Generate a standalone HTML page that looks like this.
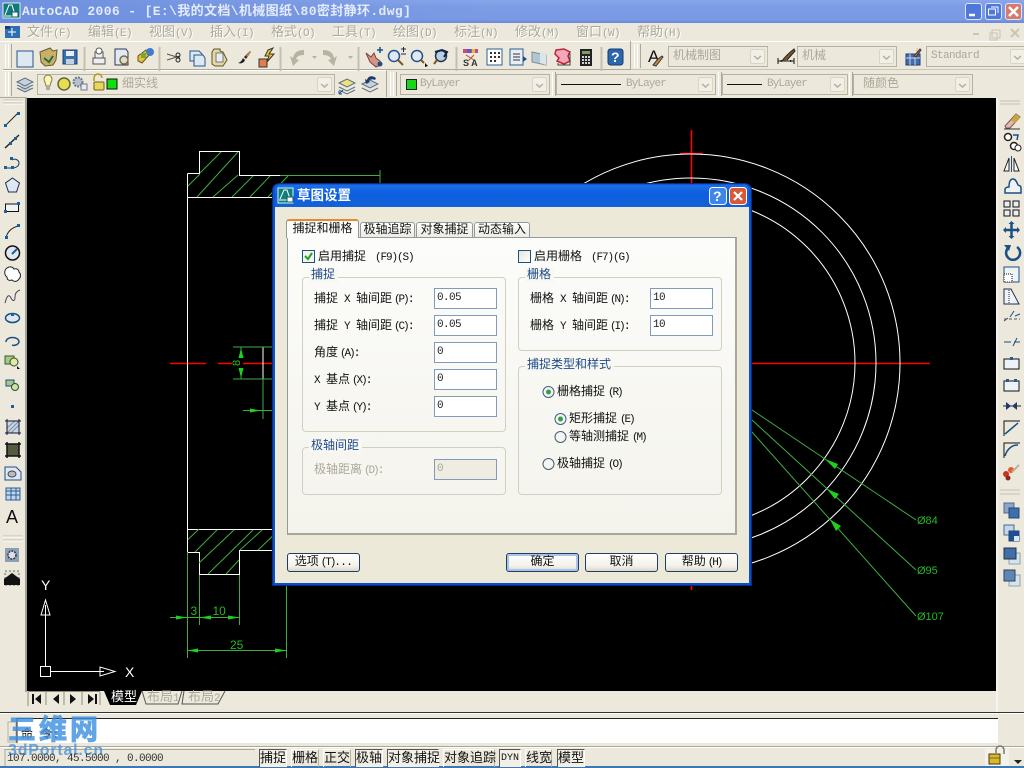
<!DOCTYPE html>
<html><head><meta charset="utf-8"><style>
html,body{margin:0;padding:0;width:1024px;height:768px;overflow:hidden;background:#ECE9DC}
body{position:relative;font-family:"Liberation Mono","WenQuanYi Zen Hei","Noto Sans CJK SC",monospace;font-size:12px;color:#111}
.a{position:absolute}
.t{position:absolute;white-space:nowrap;line-height:14px;height:14px;font-size:12px}
.t i{font-style:normal;font-size:11px;letter-spacing:-.6px}
.t i.k,.bt i.k{letter-spacing:-2.1px;margin-left:2px}
.t i.r{letter-spacing:-2.1px;margin-left:3px}
.t i.f{letter-spacing:-1.1px;margin-left:9px}
.m{position:absolute;top:25px;font-size:13px;line-height:15px;color:#aca899;text-shadow:1px 1px 0 #fff;white-space:nowrap}
.m i{font-style:normal;font-size:11px;letter-spacing:-.6px}
.cb{position:absolute;box-sizing:border-box;border:1px solid #b5b2a2;background:#ECE9DC;height:21px;color:#aca899;font-size:12px;line-height:19px;white-space:nowrap}
.cb span{position:absolute;top:0}
.cb span.l{font-size:11px;letter-spacing:-.9px}
.cb u{position:absolute;right:2px;top:2px;width:15px;height:15px;background:#f1efe6;border:1px solid #d8d5c6;box-sizing:border-box;border-radius:2px;text-decoration:none}
.cb u:after{content:"";position:absolute;left:3px;top:3px;width:5px;height:5px;border-right:2px solid #b5b2a2;border-bottom:2px solid #b5b2a2;transform:scale(.8,.7) rotate(45deg)}
.in{position:absolute;box-sizing:border-box;width:63px;height:21px;border:1px solid #7F9DB9;background:#fff;font-size:11px;letter-spacing:-.6px;line-height:18px;padding-left:2px;color:#222}
.gb{position:absolute;box-sizing:border-box;border:1px solid #d0d0bf;border-radius:4px}
.gl{position:absolute;background:#F8F7F1;padding:0 3px 0 2px;color:#1c4a8c;font-size:12px;line-height:14px;white-space:nowrap}
.bt{position:absolute;box-sizing:border-box;top:553px;width:73px;height:19px;border:1px solid #1f3d66;border-radius:3px;background:linear-gradient(#fff,#f3f2ea 70%,#dcd8c8);text-align:center;font-size:12px;line-height:17px;white-space:nowrap}
.bt i{font-style:normal;font-size:11px;letter-spacing:-.6px}
.s{position:absolute;top:749px;height:18px;box-sizing:border-box;font-size:13px;line-height:18px;text-align:center;white-space:nowrap}
.s.on{border:1px solid #555;border-right-color:#fff;border-bottom:0;background:#f1efe6}
.s.off{border-left:1px solid #fff;border-top:1px solid #fff;border-right:1px solid #b5b2a2}
.g{position:absolute;width:2px;border-left:1px solid #fff;border-right:1px solid #aca899}
</style></head><body>

<!-- title bar -->
<div class="a" style="left:0;top:0;width:1024px;height:23px;background:linear-gradient(#88a6ea,#7c9ce6 30%,#7a9ae3 85%,#6b89d8)"></div>
<div class="a" style="left:0;top:0;width:500px;height:23px;background:linear-gradient(90deg,#6f90de,rgba(111,144,222,0))"></div>
<div class="t" style="left:22px;top:4px;color:#e4ebfa;font-weight:bold;font-size:13px;line-height:15px;letter-spacing:.37px">AutoCAD 2006 - [E:\我的文档\机械图纸\80密封静环.dwg]</div>

<!-- menu -->
<div class="m" style="left:27px">文件<i>(F)</i></div>
<div class="m" style="left:88px">编辑<i>(E)</i></div>
<div class="m" style="left:149px">视图<i>(V)</i></div>
<div class="m" style="left:210px">插入<i>(I)</i></div>
<div class="m" style="left:271px">格式<i>(O)</i></div>
<div class="m" style="left:332px">工具<i>(T)</i></div>
<div class="m" style="left:393px">绘图<i>(D)</i></div>
<div class="m" style="left:454px">标注<i>(N)</i></div>
<div class="m" style="left:515px">修改<i>(M)</i></div>
<div class="m" style="left:576px">窗口<i>(W)</i></div>
<div class="m" style="left:637px">帮助<i>(H)</i></div>

<!-- toolbar backgrounds -->
<div class="a" style="left:0;top:41px;width:1024px;height:1px;background:#fff"></div>
<div class="a" style="left:3px;top:69px;width:1021px;height:1px;background:#c9c6b6"></div>
<div class="a" style="left:3px;top:41px;width:627px;height:28px;border-right:1px solid #aca899;border-bottom:1px solid #aca899"></div>
<div class="a" style="left:3px;top:70px;width:383px;height:26px;border-right:1px solid #aca899;border-top:1px solid #fff"></div>
<div class="g" style="left:5px;top:44px;height:24px"></div><div class="g" style="left:8px;top:44px;height:24px"></div>
<div class="g" style="left:5px;top:72px;height:24px"></div><div class="g" style="left:8px;top:72px;height:24px"></div>
<div class="g" style="left:390px;top:72px;height:24px"></div><div class="g" style="left:393px;top:72px;height:24px"></div>
<div class="g" style="left:552px;top:72px;height:24px"></div><div class="g" style="left:718px;top:72px;height:24px"></div><div class="g" style="left:849px;top:72px;height:24px"></div>
<div class="g" style="left:634px;top:44px;height:24px"></div><div class="g" style="left:637px;top:44px;height:24px"></div>

<!-- combos -->
<div class="cb" style="left:668px;top:46px;width:100px"><span style="left:4px;font-size:12px">机械制图</span><u></u></div>
<div class="cb" style="left:797px;top:46px;width:100px"><span style="left:4px">机械</span><u></u></div>
<div class="cb" style="left:926px;top:46px;width:99px"><span class="l" style="left:4px;letter-spacing:-.6px">Standard</span><u style="right:-1px"></u></div>
<div class="cb" style="left:37px;top:74px;width:298px"><span style="left:84px">细实线</span><u></u></div>
<div class="cb" style="left:400px;top:74px;width:150px"><span class="l" style="left:19px">ByLayer</span><u></u><b class="a" style="left:5px;top:4px;width:9px;height:9px;background:#19d619;border:1px solid #222"></b></div>
<div class="cb" style="left:556px;top:74px;width:160px"><span class="l" style="left:69px">ByLayer</span><u></u><b class="a" style="left:4px;top:9px;width:60px;height:1px;background:#111"></b></div>
<div class="cb" style="left:722px;top:74px;width:126px"><span class="l" style="left:44px">ByLayer</span><u></u><b class="a" style="left:4px;top:9px;width:35px;height:1px;background:#111"></b></div>
<div class="cb" style="left:853px;top:74px;width:120px"><span style="left:9px">随颜色</span><u></u></div>

<!-- canvas -->
<div class="a" style="left:27px;top:98px;width:969px;height:593px;background:#000"></div>
<div class="a" style="left:0;top:97px;width:27px;height:1px;background:#aca899"></div>

<svg class="a" style="left:0;top:0" width="1024" height="768" viewBox="0 0 1024 768" fill="none">
<!-- drawing -->
<g stroke="#ff0000" stroke-width="1.600">
<path d="M170 363.500H206M218 363.500H232M243 363.500H280M740 363.500H930M691.500 130V590"/>
<path d="M680 153.500H703"/>
</g>
<g stroke="#fff" stroke-width="1">
<circle cx="691" cy="363" r="209"/><circle cx="691" cy="363" r="185"/><circle cx="691" cy="363" r="164"/>
<path d="M187.5 173.5H199.5V151.5H239.5V175.5H380M187.5 173.5V552.5H199.5V574.5H239.5V550.5H300M187.5 197.5H300M187.5 529.5H300"/>
<path d="M263 347V379M263 347H280M263 379H280"/>
</g>
<g stroke="#3fae3f" stroke-width="1">
<path d="M188 186L200 174M200 173L221 152M197 197L238 152M213 197L238 175M232 197L253 176M250 197L270 176M268 197L288 176"/>
<path d="M188 539.500L199 529M195 552L217 530M199 563L234 530M208 574L253 530M226 574L239 560M240 550L262 530M258 550L279 530"/>
<path d="M233 347H273M233 379H273M241 347V357M241 369V379M263 379V419M243 410.5H273"/>
<path d="M187.5 552V658M199.5 575V625M239.5 575V625M286.5 585V658M170 617.5H239M187 650.5H286"/>
<path d="M280 175.5H380M380 170V185"/>
<path d="M752 410L916 520M752 420L916 570M752 432L916 616"/>
</g>
<g fill="#1ed01e">
<path d="M241 348L243.500 358H238.500ZM241 378L243.500 368H238.500ZM261 410.500L250 408.500V412.500ZM187 617.500L176 615.500V619.500ZM199.500 617.500L211 615.500V619.500ZM239.500 617.500L228 615.500V619.500ZM187 650.500L198 648.500V652.500ZM286.500 650.500L275 648.500V652.500Z"/>
<path d="M825 459L838 464L835 469ZM827 489L839 494L835 499ZM830 519.500L841 526L836 531Z"/>
</g>
<g font-family="Liberation Sans" fill="#26b826" font-size="12">
<text x="190.500" y="615">3</text><text x="212.500" y="615">10</text><text x="230" y="649">25</text>
<text x="917" y="524" font-size="11">Ø84</text><text x="917" y="574" font-size="11">Ø95</text><text x="917" y="620" font-size="11">Ø107</text>
<text transform="translate(240,366) rotate(-90)" font-size="11">8</text>
</g>
<!-- UCS -->
<g stroke="#fff" stroke-width="1">
<rect x="40.500" y="666.500" width="10" height="10"/><path d="M45.500 666V605M50 671.500H104"/>
<path d="M45.500 600L41 615H50ZM115 671.500L100 667V676Z"/>
</g>
<g font-family="Liberation Sans" font-size="14" fill="#fff"><text x="41" y="590">Y</text><text x="125" y="677">X</text></g>

<!-- top-left window icon -->
<rect x="3" y="3" width="17" height="15" fill="#0f7a79" stroke="#d9f0ec"/><path d="M5 15L9 5h3l3 10M4 16H13" stroke="#fff"/><rect x="12" y="12" width="6" height="5" fill="#fff" stroke="#0f5a59"/>
<rect x="5" y="26" width="15" height="12" fill="#2d6fb3"/><rect x="5" y="26" width="5" height="3" fill="#1b3a78"/><path d="M12 28v8M8 32h8" stroke="#fff"/>
<!-- window buttons -->
<g stroke="#dce6fa"><rect x="965.500" y="3.500" width="16" height="16" rx="2.500" fill="#4f78d8"/><rect x="985.500" y="3.500" width="16" height="16" rx="2.500" fill="#4f78d8"/><rect x="1005.500" y="3.500" width="16" height="16" rx="2.500" fill="#d77a6b"/></g>
<path d="M969 15h6" stroke="#fff" stroke-width="2.500"/><path d="M988.500 9h7v6h-7zM991 7h7v6" stroke="#fff"/><path d="M1009 7l9 9M1018 7l-9 9" stroke="#fff" stroke-width="2.500"/>
<g stroke="#c8c5b6"><path d="M973 34h6" stroke-width="2"/><path d="M992 30h8v8h-8zM990 33h7v7h-7z"/><path d="M1011 29l8 8M1019 29l-8 8" stroke-width="2"/></g>

<!-- toolbar 1 icons -->
<path d="M17 51h16v16H17z" fill="#dce9f3" stroke="#27558b"/>
<path d="M40 52l10-4 3 3 4-1-1 10-3 5-8 1-4-4z" fill="#c8b06a" stroke="#6a5a2c"/><path d="M44 58l5 4 4-6" stroke="#2a6e38" stroke-width="2"/>
<rect x="63" y="50" width="14" height="14" fill="#3a70b0" stroke="#1f3e70"/><rect x="66" y="51" width="8" height="5" fill="#e8eef4"/><rect x="66" y="59" width="8" height="5" fill="#c3d1dd"/>
<path d="M84 47v24M85 47v24M159 47v24M160 47v24M280 47v24M281 47v24M358 47v24M359 47v24M456 47v24M457 47v24M601 47v24M602 47v24M767.500 48v18M917 48v18" stroke="#c3c0b0"/>
<path d="M95 52h8v6h-8zM93 58h12v6H93z" fill="#eee" stroke="#555"/><circle cx="99" cy="51" r="3" fill="#fff" stroke="#555"/>
<path d="M115 49h11l2 3v13h-13z" fill="#dfeaf4" stroke="#335"/><circle cx="124" cy="60" r="4" fill="#cfe1f0" stroke="#8c6b24" stroke-width="1.500"/>
<path d="M138 56l8-6 4 4-8 9-4-2z" fill="#e6c23a" stroke="#6a5020"/><circle cx="150" cy="52" r="4" fill="#3f7dc8"/><rect x="141" y="53" width="5" height="5" fill="#7a3"/>
<path d="M167 54l13 4M167 60l13-4" stroke="#555"/><circle cx="178" cy="55" r="2" stroke="#222"/><circle cx="178" cy="60" r="2" stroke="#222"/>
<path d="M190 51h9l3 3v7h-12z" fill="#dce8f3" stroke="#27558b"/><path d="M194 55h9l2 3v8h-11z" fill="#dce8f3" stroke="#27558b"/>
<path d="M214 49h6v2l3 1 4 8-4 6h-8l-3-2v-12z" fill="#e3d9a4" stroke="#5f5428"/><rect x="216" y="53" width="7" height="9" fill="#e8edf2" stroke="#777"/>
<path d="M238 63c3-1 4-3 5-5l2 2c-1 3-4 4-7 3zM244 57l6-6 1 1-5 7z" fill="#222"/><path d="M246 56l4-5 1 1-4 5z" fill="#c98c3e"/>
<rect x="259" y="59" width="8" height="8" fill="#e37d4d" stroke="#333"/><path d="M268 50l5-2-4 6h5l-7 8 2-6h-4z" fill="#f0c92f" stroke="#333"/>
<path d="M304 50c-7 0-10 3-11 8l-3-2 3 10 6-6-3-1c1-3 4-4 8-4z" fill="#b6b3a3"/>
<path d="M323 50c7 0 10 3 11 8l3-2-3 10-6-6 3-1c-1-3-4-4-8-4z" fill="#b6b3a3"/>
<path d="M312 56h5l-2.500 3zM348 56h5l-2.500 3z" fill="#b6b3a3"/>
<path d="M366 53l5 4 3-4 2 5 4 3 1 4-5 2-6-5z" fill="#d79485" stroke="#744"/><path d="M377 50h6M380 47v6" stroke="#1c4f86" stroke-width="1.500"/><circle cx="380" cy="64" r="2.500" fill="#1c4f86"/>
<circle cx="394" cy="56" r="5.500" fill="#dfe9f4" stroke="#23528c" stroke-width="1.500"/><path d="M398 60l5 5" stroke="#7b5a20" stroke-width="2"/><path d="M401 49h5M403.500 47v5M401 54h5" stroke="#223"/>
<circle cx="417" cy="56" r="5.500" fill="#dfe9f4" stroke="#23528c" stroke-width="1.500"/><path d="M421 60l3 3" stroke="#7b5a20" stroke-width="2"/><path d="M425 63l3 3-3 1z" fill="#111"/>
<circle cx="441" cy="56" r="5.500" fill="#b9cfe8" stroke="#234" stroke-width="1.500"/><path d="M437 60l-3 4" stroke="#7b5a20" stroke-width="2"/><path d="M435 52l7-2 5 2-3 5" stroke="#124" stroke-width="2"/>
<rect x="463" y="49" width="15" height="4" fill="#c74a88"/><rect x="467" y="49" width="4" height="4" fill="#5a5ec0"/><rect x="472" y="49" width="3" height="4" fill="#e0c030"/>
<text x="463" y="66" font-family="Liberation Sans" font-size="9" fill="#333" font-weight="bold">S A</text><path d="M466 55l8 5M474 55l-6 6" stroke="#a53"/>
<rect x="487" y="49" width="15" height="16" fill="#fff" stroke="#2a5f92"/><g fill="#333"><rect x="490" y="52" width="2" height="2"/><rect x="494" y="52" width="2" height="2"/><rect x="498" y="52" width="2" height="2"/><rect x="490" y="56" width="2" height="2"/><rect x="494" y="56" width="2" height="2"/><rect x="498" y="56" width="2" height="2"/><rect x="490" y="60" width="2" height="2"/><rect x="494" y="60" width="2" height="2"/></g>
<rect x="510" y="49" width="13" height="16" fill="#e7eef5" stroke="#2a5f92"/><path d="M513 54h7M513 57h7M513 60h7" stroke="#333"/><path d="M523 56l4 3-4 3z" fill="#1c4f86"/>
<path d="M532 52l14 3v10l-14-3z" fill="#b2c6d0" stroke="#7a8f9a"/><path d="M540 51l6 2v12l-6-2z" fill="#dce6ea"/>
<path d="M556 50l8-1 6 3-2 4 2 5-6 3-7-3 2-3-4-4z" fill="#f2a8b8" stroke="#c11f3a" stroke-width="1.500"/><path d="M568 54h2v11h-12v-2" stroke="#444"/>
<rect x="580" y="49" width="12" height="17" fill="#222"/><rect x="582" y="51" width="8" height="3" fill="#7b9a66"/><g fill="#d2d2d2"><rect x="582" y="56" width="2" height="2"/><rect x="585" y="56" width="2" height="2"/><rect x="588" y="56" width="2" height="2"/><rect x="582" y="59" width="2" height="2"/><rect x="585" y="59" width="2" height="2"/><rect x="588" y="59" width="2" height="2"/><rect x="582" y="62" width="2" height="2"/><rect x="585" y="62" width="2" height="2"/><rect x="588" y="62" width="2" height="2"/></g>
<rect x="608" y="49" width="15" height="16" rx="2.500" fill="#2c66ad" stroke="#153a6e"/><text x="611" y="62" font-family="Liberation Sans" font-weight="bold" font-size="14" fill="#fff">?</text>
<text x="648" y="62" font-family="Liberation Sans" font-size="17" fill="#111">A</text><path d="M653 65l5-6 4-3 1 1-3 4-4 5z" fill="#c98c3e" stroke="#433"/>
<path d="M778 61h16M778 58v6M794 58v6" stroke="#111"/><path d="M782 61c2-3 7-8 12-12l1 2-8 9" fill="#7a5a28" stroke="#222"/><path d="M778 61l4-1v2zM794 61l-4-1v2z" fill="#111"/>
<rect x="906" y="54" width="14" height="11" fill="#3d6faa" stroke="#1f3e70"/><path d="M906 58h14M910 54v11M915 54v11" stroke="#dce"/><path d="M914 56l6-7 1 1-5 7z" fill="#b47a3c" stroke="#433"/>

<!-- toolbar 2 icons -->
<path d="M17 82l8-4 8 4-8 4zM17 85l8 4 8-4M17 88l8 4 8-4" fill="#c4d2de" stroke="#5f6f80"/>
<path d="M44 79a4 4 0 0 1 8 0c0 3-2 4-2 7h-4c0-3-2-4-2-7z" fill="#fbf6b5" stroke="#857b4a"/><rect x="46" y="87" width="4" height="3" fill="#aaa"/>
<circle cx="64" cy="84" r="6" fill="#e8dc50" stroke="#5e6b3a" stroke-width="1.500"/>
<circle cx="78" cy="82" r="4.500" fill="#b6bfca" stroke="#6c7e92" stroke-width="2" stroke-dasharray="2 1"/><rect x="81" y="84" width="6" height="6" fill="#e5ebf0" stroke="#778"/>
<path d="M94 81v-3a4 4 0 0 1 8 0" stroke="#b19a1c" stroke-width="1.500"/><rect x="94" y="82" width="10" height="8" rx="1" fill="#e8d85a" stroke="#6f6418"/>
<rect x="107" y="79" width="10" height="10" fill="#11dd11" stroke="#111"/>
<path d="M339 83l8-4 8 4-8 4z" fill="#e9e27e" stroke="#5f6f80"/><path d="M339 87l8 4 8-4M339 90l8 4 8-4" stroke="#5f6f80"/><path d="M339 94l4-4M339 94v-3M339 94h3" stroke="#1c4f86"/>
<path d="M362 84l8-4 8 4-8 4z" fill="#c4d2de" stroke="#5f6f80"/><path d="M362 88l8 4 8-4" stroke="#5f6f80"/><path d="M376 78c-4-3-8-2-9 2l-2-1 1 5 4-2-1-1c1-2 4-2 6-1z" fill="#1c3a6e"/>

<!-- left tools -->
<g stroke-width="1">
<path d="M6 125L18 113" stroke="#222"/><g fill="#1c5f9e"><rect x="4" y="124" width="3" height="3"/><rect x="17" y="112" width="3" height="3"/></g>
<path d="M5 148L19 135" stroke="#222" stroke-width="1.500"/><g fill="#1c5f9e"><rect x="9" y="142" width="3" height="3"/><rect x="14" y="137" width="3" height="3"/></g>
<path d="M5 168h7c4 0 7-2 7-5s-4-5-7-3" stroke="#1c3a5e"/><g fill="#1c5f9e"><rect x="4" y="166" width="3" height="3"/><rect x="11" y="166" width="3" height="3"/><rect x="10" y="157" width="3" height="3"/></g>
<path d="M12.500 178l7 5-3 9h-8l-3-9z" fill="#dfe7f1" stroke="#1c2f4e"/>
<rect x="5.500" y="204" width="13" height="7.500" fill="#eff3f7" stroke="#111"/><rect x="4" y="210" width="3" height="3" fill="#1c5f9e"/><rect x="17" y="202" width="3" height="3" fill="#1c5f9e"/>
<path d="M6 238c1-6 6-11 13-12" stroke="#222"/><g fill="#1c5f9e"><rect x="5" y="236" width="3" height="3"/><rect x="17" y="224" width="3" height="3"/></g>
<circle cx="12.500" cy="253" r="7" fill="#dfe7f1" stroke="#111" stroke-width="1.500"/><path d="M12 254l5-5" stroke="#1c5f9e" stroke-width="2"/>
<path d="M7 268c3-2 6-1 7 1 3-1 5 1 5 3 2 2 2 5 0 7-2 3-5 3-7 1-3 1-5 0-5-3-3-2-3-7 0-9z" fill="#fff" stroke="#222"/>
<path d="M5 303c2-8 4-9 6-5s4 3 4-1 2-6 5-7" stroke="#445"/>
<ellipse cx="12.500" cy="318" rx="7" ry="4.500" fill="#dfe7f1" stroke="#1c4f86" stroke-width="1.500"/><rect x="11" y="313" width="3" height="3" fill="#1c5f9e"/>
<path d="M6 342c0-6 13-6 13 0-1 3-5 4-7 3" stroke="#1c4f86" stroke-width="1.500"/>
<rect x="5" y="356" width="9" height="8" fill="#a9c788" stroke="#2b5f2e"/><circle cx="14" cy="362" r="4" fill="#e8e6a0" stroke="#2b4f2e"/><path d="M17 366l3 3h-3z" fill="#111"/>
<rect x="6" y="380" width="8" height="6" fill="#a9c788" stroke="#1c4f86"/><circle cx="15" cy="387" r="3.500" fill="#cfe0a8" stroke="#2b4f2e"/>
<rect x="11" y="405" width="3" height="3" fill="#1c5f9e"/>
<rect x="7" y="421" width="12" height="12" fill="#c9d7e5"/><path d="M7 433l12-12M7 428l8-7M11 433l8-8" stroke="#7a8ea5"/><path d="M5 421H21M5 433H21M7 419V435M19 419V435" stroke="#113"/>
<rect x="7" y="444" width="12" height="12" fill="#555a40"/><path d="M5 444H21M5 456H21M7 442V458M19 442V458" stroke="#111" stroke-width="1.500"/>
<path d="M5 467h11l5 5v8H5z" fill="#dfe7f1" stroke="#1c4f86"/><ellipse cx="12" cy="474" rx="4" ry="3" fill="#bbb" stroke="#445"/>
<rect x="6" y="488" width="14" height="12" fill="#c4d6ec" stroke="#2a5f92"/><path d="M6 491h14M6 495h14M11 488v12M16 488v12" stroke="#2a5f92"/>
<text x="6" y="523" font-family="Liberation Sans" font-size="18" fill="#111">A</text>
<rect x="5" y="548" width="14" height="14" fill="#8ba0b4"/><circle cx="12" cy="555" r="4" fill="#dde" stroke="#334" stroke-width="1.500" stroke-dasharray="2 1"/>
<rect x="5" y="571" width="14" height="14" fill="#e4e2d6" stroke="#666" stroke-dasharray="2 2"/><path d="M4 579l8-6 8 6v6H4z" fill="#111"/>
</g>
<path d="M3 100h20M3 103h20M3 536h20M3 540h20" stroke="#c4c1b1"/><path d="M3 101h20M3 104h20M3 537h20M3 541h20" stroke="#fff"/>
<path d="M26 98V692" stroke="#555"/>

<!-- right tools -->
<path d="M1000 101h20M1000 104h20M1000 490h20M1000 494h20" stroke="#c4c1b1"/>
<path d="M1005 126l11-12 4 3-10 11h-4z" fill="#e4b9b0" stroke="#755"/><path d="M1011 120l5-6 4 3-5 6z" fill="#c9a73a"/><path d="M1004 129h16" stroke="#333"/>
<circle cx="1008" cy="137" r="3.500" fill="#fff" stroke="#222" stroke-width="1.500"/><circle cx="1014" cy="146" r="3.500" fill="#fff" stroke="#222" stroke-width="1.500"/><circle cx="1018" cy="148" r="3" fill="#fff" stroke="#222"/><path d="M1013 135h5l-1 5" stroke="#1c4f86" stroke-width="1.500"/>
<path d="M1011.500 156v16" stroke="#1c4f86"/><path d="M1009 158v13h-5zM1014 158v13h5z" fill="#fff" stroke="#222"/>
<path d="M1005 193v-4c1-2 3-2 4-2 0-4 1-8 4-8s4 4 5 6c2 1 3 1 3 3v5zM1008 193h12" fill="#eef3f8" stroke="#1c4f86" stroke-width="1.500"/>
<path d="M1004 201h6v6h-6zM1013 201h6v6h-6zM1004 210h6v6h-6zM1013 210h6v6h-6z" fill="#e8eef4" stroke="#111"/>
<path d="M1011.500 223v14M1004 230h15" stroke="#1c4f86" stroke-width="2.500"/><path d="M1011.500 221l3 3h-6zM1011.500 239l3-3h-6zM1003 230l3-3v6zM1020 230l-3-3v6z" fill="#1c4f86"/>
<path d="M1017 247a7 7 0 1 1-9 1" stroke="#1c4f86" stroke-width="2.500"/><path d="M1004 245l7 0-2 6z" fill="#1c4f86"/>
<rect x="1004" y="267" width="15" height="15" fill="#eef3f8" stroke="#1c4f86"/><rect x="1004" y="274" width="8" height="8" fill="#fff" stroke="#111" stroke-dasharray="1 1"/>
<path d="M1004 289h7l8 15h-15z" fill="#eef3f8" stroke="#1c2f4e"/><path d="M1009 290v14" stroke="#222" stroke-dasharray="1 1"/>
<path d="M1004 321l4-3M1010 317l4-6M1015 316l5-2" stroke="#1c4f86"/><path d="M1004 319h16" stroke="#555" stroke-dasharray="3 2"/>
<path d="M1004 342h7M1014 342h6M1013 346l4-8" stroke="#1c4f86"/>
<rect x="1004" y="359" width="15" height="10" fill="#eef3f8" stroke="#111"/><rect x="1010" y="357" width="3" height="3" fill="#1c5f9e"/>
<rect x="1004" y="381" width="15" height="10" fill="#eef3f8" stroke="#111"/><rect x="1006" y="379" width="3" height="3" fill="#1c5f9e"/><rect x="1014" y="379" width="3" height="3" fill="#1c5f9e"/>
<path d="M1003 406h18" stroke="#222"/><path d="M1011 406l-5-4v8zM1012 406l5-4v8z" fill="#1c3a6e"/>
<path d="M1004 436v-15h16" stroke="#111"/><path d="M1005 434l13-11" stroke="#1c4f86" stroke-width="1.500"/>
<path d="M1004 458v-15h16" stroke="#111"/><path d="M1005 456c2-7 7-11 13-11" stroke="#1c4f86" stroke-width="1.500"/>
<circle cx="1006" cy="474" r="3" fill="#c8341e"/><circle cx="1011" cy="470" r="3" fill="#e85a2a"/><circle cx="1008" cy="478" r="2.500" fill="#8e2a16"/><path d="M1012 472l7-7" stroke="#b9b0a0" stroke-width="2"/>
<rect x="1004" y="503" width="10" height="10" fill="#8ea6c4" stroke="#4a6a90"/><rect x="1009" y="508" width="10" height="10" fill="#3f6ea8" stroke="#23477a"/>
<rect x="1004" y="525" width="10" height="10" fill="#c4d6ea" stroke="#4a6a90"/><rect x="1009" y="531" width="10" height="10" fill="#1f4f90" stroke="#23477a"/><rect x="1014" y="536" width="5" height="5" fill="#dde7f1"/>
<rect x="1009" y="553" width="11" height="11" fill="#d6e2ee" stroke="#8aa"/><rect x="1004" y="548" width="12" height="11" fill="#3f6ea8" stroke="#234"/>
<rect x="1009" y="575" width="11" height="11" fill="#d6e2ee" stroke="#8aa"/><rect x="1004" y="570" width="11" height="11" fill="#5f86b8" stroke="#345"/>

<!-- tab nav -->
<g stroke="#8f8c7e"><path d="M28 691.500V706M28.500 691.500H100M46 692v13M64 692v13M82 692v13M100 692v13" stroke-width="1"/></g>
<g fill="#111"><path d="M32 694h2v10h-2zM41 694v10l-6-5zM59 694v10l-6-5zM70 694v10l6-5zM88 694v10l6-5zM95 694h2v10h-2z"/></g>
<path d="M104 691l6 14h26l6-14z" fill="#000"/>
<path d="M142 691l4 13h32l4-13M184 691l-2 13h36l7-13" stroke="#555" fill="#ECE9DC"/>

<!-- command area -->
<path d="M0 712.500H1024" stroke="#333"/><path d="M0 713.500H1024" stroke="#fff"/>
<rect x="17" y="718" width="981" height="25" fill="#fff"/><path d="M17 718.500H998" stroke="#222"/><path d="M17 718V743" stroke="#222"/>
<path d="M0 746.500H1024" stroke="#aca899"/><path d="M0 747.500H1024" stroke="#fff"/>
<path d="M997 98V712" stroke="#fff"/>
<path d="M8 722h8v20H8z" stroke="#b8b5a6"/>
<!-- status -->
<path d="M5 749.500H255M5 749V766" stroke="#aca899"/>
<rect x="0" y="766" width="1024" height="2" fill="#3f77b4"/>
<!-- lock -->
<rect x="985" y="749" width="24" height="17" fill="#f3f1e8"/>
<path d="M996 753v-3a4 4 0 0 1 8 0v4" stroke="#777" stroke-width="1.500" fill="none"/><rect x="989" y="754" width="11" height="10" fill="#d8b82f" stroke="#443a10"/><path d="M989 758h11" stroke="#7a6a16"/>
<path d="M1014 760h8l-4 4z" fill="#222"/>
</svg>

<div class="t" style="left:111px;top:690px;color:#fff;font-size:13px;line-height:16px;height:16px">模型</div>
<div class="t" style="left:147px;top:690px;color:#aca899;font-size:13px;line-height:16px;height:16px">布局<i>1</i></div>
<div class="t" style="left:188px;top:690px;color:#aca899;font-size:13px;line-height:16px;height:16px">布局<i>2</i></div>

<!-- command text and watermark -->
<div class="t" style="left:21px;top:728px;color:#111;line-height:14px">命 令:</div>
<div class="t" style="left:8px;top:716px;color:#3c8fe0;opacity:.8;font-family:'Liberation Sans','WenQuanYi Zen Hei','Noto Sans CJK SC',sans-serif;font-size:28px;letter-spacing:3px;-webkit-text-stroke:1px #3c8fe0;font-weight:bold;line-height:28px;height:28px">三维网</div>
<div class="t" style="left:8px;top:743px;color:#3c8fe0;opacity:.75;font-family:'Liberation Sans',sans-serif;font-size:16px;font-weight:bold;line-height:16px;height:16px;letter-spacing:.8px">3dPortal.cn</div>
<div class="t" style="left:7px;top:752px;color:#333;font-size:11px;letter-spacing:-.6px;line-height:14px">107.0000, 45.5000 , 0.0000</div>

<!-- status buttons -->
<div class="s on" style="left:259px;width:28px">捕捉</div>
<div class="s off" style="left:291px;width:28px">栅格</div>
<div class="s off" style="left:323px;width:28px">正交</div>
<div class="s on" style="left:355px;width:28px">极轴</div>
<div class="s on" style="left:387px;width:52px">对象捕捉</div>
<div class="s off" style="left:443px;width:52px">对象追踪</div>
<div class="s on" style="left:499px;width:22px;font-size:10px">DYN</div>
<div class="s off" style="left:525px;width:27px">线宽</div>
<div class="s on" style="left:557px;width:28px">模型</div>

<!-- dialog -->
<div class="a" style="left:272px;top:183px;width:480px;height:403px;box-sizing:border-box;border:1px solid #0a2a7a;border-radius:7px 7px 0 0;background:linear-gradient(#0a5ae0,#0a53d0 10px,#0a4fc8)"></div>
<div class="a" style="left:275px;top:185px;width:474px;height:22px;background:linear-gradient(#1e6ee8,#0d5fe0 40%,#1360d8);border-radius:5px 5px 0 0"></div>
<div class="a" style="left:275px;top:207px;width:474px;height:376px;background:#ECE9D8"></div>
<svg class="a" style="left:272px;top:183px" width="480" height="30" fill="none">
<rect x="6" y="5" width="15" height="15" fill="#0f7f7c" stroke="#d5f0ec"/><path d="M8 16L12 7h3l3 9M7 17H16" stroke="#fff"/><rect x="15" y="14" width="6" height="5" fill="#fff" stroke="#0f5a59"/>
<rect x="437.500" y="4.500" width="17" height="17" rx="3" fill="#3e86e8" stroke="#fff"/>
<rect x="457.500" y="4.500" width="17" height="17" rx="3" fill="#d8593a" stroke="#fff"/><path d="M462 9l8 8M470 9l-8 8" stroke="#fff" stroke-width="2.200"/>
<text x="441" y="18" font-family="Liberation Sans" font-size="14" font-weight="bold" fill="#fff">?</text>
</svg>
<div class="t" style="left:297px;top:189px;color:#fff;font-size:13.500px;font-weight:bold;line-height:17px;height:17px">草图设置</div>

<!-- tab panel -->
<div class="a" style="left:287px;top:237px;width:450px;height:298px;box-sizing:border-box;border:1px solid #919B9C;border-bottom:2px solid #a8a79a;border-right:2px solid #a8a79a;background:linear-gradient(#FCFCFA,#F4F3EC)"></div>
<div class="a" style="left:360px;top:222px;width:55px;height:15px;box-sizing:border-box;border:1px solid #919B9C;border-bottom:0;border-radius:3px 3px 0 0;background:linear-gradient(#fff,#ecebe3);font-size:12px;text-align:center;line-height:14px">极轴追踪</div>
<div class="a" style="left:416px;top:222px;width:57px;height:15px;box-sizing:border-box;border:1px solid #919B9C;border-bottom:0;border-radius:3px 3px 0 0;background:linear-gradient(#fff,#ecebe3);font-size:12px;text-align:center;line-height:14px">对象捕捉</div>
<div class="a" style="left:474px;top:222px;width:56px;height:15px;box-sizing:border-box;border:1px solid #919B9C;border-bottom:0;border-radius:3px 3px 0 0;background:linear-gradient(#fff,#ecebe3);font-size:12px;text-align:center;line-height:14px">动态输入</div>
<div class="a" style="left:286px;top:219px;width:73px;height:19px;box-sizing:border-box;border:1px solid #919B9C;border-top:2px solid #E68B2C;border-bottom:0;border-radius:3px 3px 0 0;background:#FCFCFA;font-size:12px;text-align:center;line-height:16px">捕捉和栅格</div>

<!-- groups -->
<div class="gb" style="left:302px;top:277px;width:204px;height:155px"></div>
<div class="gl" style="left:309px;top:268px">捕捉</div>
<div class="gb" style="left:302px;top:447px;width:204px;height:48px"></div>
<div class="gl" style="left:309px;top:439px">极轴间距</div>
<div class="gb" style="left:518px;top:277px;width:204px;height:74px"></div>
<div class="gl" style="left:525px;top:268px">栅格</div>
<div class="gb" style="left:518px;top:366px;width:204px;height:129px"></div>
<div class="gl" style="left:525px;top:358px">捕捉类型和样式</div>

<!-- checks -->
<div class="a" style="left:302px;top:250px;width:13px;height:13px;box-sizing:border-box;border:1px solid #1c5180;background:#f4f3ec"></div>
<svg class="a" style="left:302px;top:250px" width="13" height="13" fill="none"><path d="M3 6l3 3 4-6" stroke="#21a121" stroke-width="2"/></svg>
<div class="t" style="left:318px;top:250px">启用捕捉<i class="f">(F9)(S)</i></div>
<div class="a" style="left:518px;top:250px;width:13px;height:13px;box-sizing:border-box;border:1px solid #1c5180;background:linear-gradient(135deg,#e6e4d8,#fff)"></div>
<div class="t" style="left:534px;top:250px">启用栅格<i class="f">(F7)(G)</i></div>

<!-- left labels -->
<div class="t" style="left:314px;top:292px">捕捉<i> X </i>轴间距<i class="k">(P)</i>:</div>
<div class="t" style="left:314px;top:319px">捕捉<i> Y </i>轴间距<i class="k">(C)</i>:</div>
<div class="t" style="left:314px;top:346px">角度<i class="k">(A)</i>:</div>
<div class="t" style="left:314px;top:373px"><i>X </i>基点<i class="k">(X)</i>:</div>
<div class="t" style="left:314px;top:400px"><i>Y </i>基点<i class="k">(Y)</i>:</div>
<div class="t" style="left:314px;top:463px;color:#aca899">极轴距离<i class="k">(D)</i>:</div>
<div class="in" style="left:434px;top:288px">0.05</div>
<div class="in" style="left:434px;top:315px">0.05</div>
<div class="in" style="left:434px;top:342px">0</div>
<div class="in" style="left:434px;top:369px">0</div>
<div class="in" style="left:434px;top:396px">0</div>
<div class="in" style="left:434px;top:459px;background:#EFEDE2;color:#aca899">0</div>

<!-- right labels -->
<div class="t" style="left:530px;top:292px">栅格<i> X </i>轴间距<i class="k">(N)</i>:</div>
<div class="t" style="left:530px;top:319px">栅格<i> Y </i>轴间距<i class="k">(I)</i>:</div>
<div class="in" style="left:650px;top:288px">10</div>
<div class="in" style="left:650px;top:315px">10</div>

<!-- radios -->
<svg class="a" style="left:540px;top:383px" width="40" height="90" fill="none">
<g stroke="#3f5f80" fill="#f6f5ef"><circle cx="8.500" cy="9" r="5.500"/><circle cx="20.500" cy="36" r="5.500"/><circle cx="20.500" cy="54" r="5.500"/><circle cx="8.500" cy="81" r="5.500"/></g>
<circle cx="8.500" cy="9" r="2.500" fill="#2fa04c"/><circle cx="20.500" cy="36" r="2.500" fill="#2fa04c"/>
</svg>
<div class="t" style="left:557px;top:385px">栅格捕捉<i class="r">(R)</i></div>
<div class="t" style="left:569px;top:412px">矩形捕捉<i class="r">(E)</i></div>
<div class="t" style="left:569px;top:430px">等轴测捕捉<i class="r">(M)</i></div>
<div class="t" style="left:557px;top:457px">极轴捕捉<i class="r">(O)</i></div>

<!-- buttons -->
<div class="bt" style="left:287px">选项<i class="k">(T)</i><i>...</i></div>
<div class="bt" style="left:506px;box-shadow:inset 0 0 0 2px #a9c4ea">确定</div>
<div class="bt" style="left:585px">取消</div>
<div class="bt" style="left:665px">帮助<i class="k">(H)</i></div>
</body></html>
